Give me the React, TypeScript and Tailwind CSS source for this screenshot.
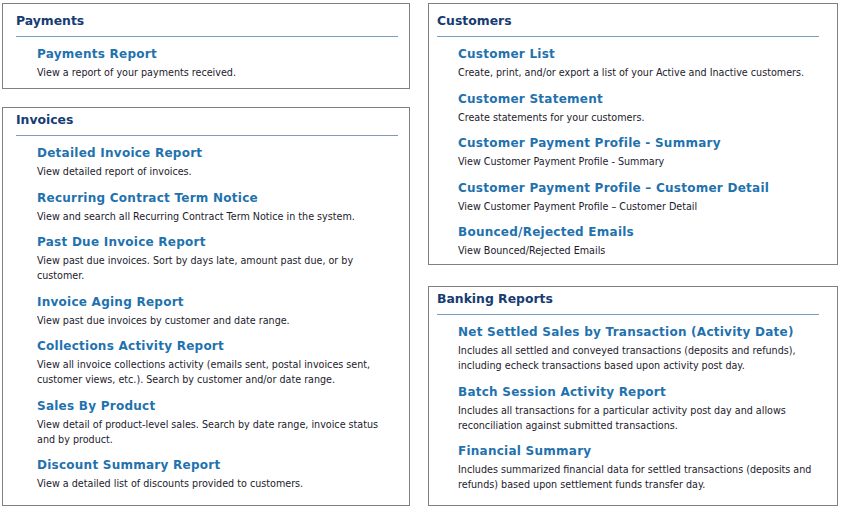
type Item = {
  title: string
  desc: string
}

type Section = {
  name: string
  items: Item[]
}

const payments: Section = {
  name: 'Payments',
  items: [{ title: 'Payments Report', desc: 'View a report of your payments received.' }],
}

const invoices: Section = {
  name: 'Invoices',
  items: [
    { title: 'Detailed Invoice Report', desc: 'View detailed report of invoices.' },
    { title: 'Recurring Contract Term Notice', desc: 'View and search all Recurring Contract Term Notice in the system.' },
    { title: 'Past Due Invoice Report', desc: 'View past due invoices. Sort by days late, amount past due, or by customer.' },
    { title: 'Invoice Aging Report', desc: 'View past due invoices by customer and date range.' },
    {
      title: 'Collections Activity Report',
      desc: 'View all invoice collections activity (emails sent, postal invoices sent, customer views, etc.). Search by customer and/or date range.',
    },
    { title: 'Sales By Product', desc: 'View detail of product-level sales. Search by date range, invoice status and by product.' },
    { title: 'Discount Summary Report', desc: 'View a detailed list of discounts provided to customers.' },
  ],
}

const customers: Section = {
  name: 'Customers',
  items: [
    { title: 'Customer List', desc: 'Create, print, and/or export a list of your Active and Inactive customers.' },
    { title: 'Customer Statement', desc: 'Create statements for your customers.' },
    { title: 'Customer Payment Profile - Summary', desc: 'View Customer Payment Profile - Summary' },
    { title: 'Customer Payment Profile \u2013 Customer Detail', desc: 'View Customer Payment Profile \u2013 Customer Detail' },
    { title: 'Bounced/Rejected Emails', desc: 'View Bounced/Rejected Emails' },
  ],
}

const banking: Section = {
  name: 'Banking Reports',
  items: [
    {
      title: 'Net Settled Sales by Transaction (Activity Date)',
      desc: 'Includes all settled and conveyed transactions (deposits and refunds), including echeck transactions based upon activity post day.',
    },
    {
      title: 'Batch Session Activity Report',
      desc: 'Includes all transactions for a particular activity post day and allows reconciliation against submitted transactions.',
    },
    {
      title: 'Financial Summary',
      desc: 'Includes summarized financial data for settled transactions (deposits and refunds) based upon settlement funds transfer day.',
    },
  ],
}

const Panel = ({ section, className }: { section: Section; className: string }) => {
  return (
    <div className={`border border-[#808080] bg-white ${className}`}>
      <div className="w-[382px]">
        <h2 className="border-b border-[#7b9bbf] pb-[6px] text-[12.4px] leading-[18px] font-bold text-[#163c72]">
          {section.name}
        </h2>
        <ul className="mt-[8px] flex flex-col gap-[9.5px] pl-[21px]">
          {section.items.map((item) => (
            <li key={item.title}>
              <a href="#" className="block text-[12px] leading-[18px] font-bold tracking-[0.25px] text-[#1f72ae]">
                {item.title}
              </a>
              <p className="mt-[2px] text-[9.6px] leading-[15px] text-[#1c1a2c]">{item.desc}</p>
            </li>
          ))}
        </ul>
      </div>
    </div>
  )
}

export default function App() {
  return (
    <div
      className="flex h-[510px] w-[841px] items-stretch gap-[18px] bg-white pt-[3px] pb-[4px] pl-[2px]"
      style={{ fontFamily: '"DejaVu Sans", Verdana, sans-serif' }}
    >
      <div className="flex w-[408px] flex-col gap-[18px]">
        <Panel section={payments} className="pt-[8px] pb-[8px] pl-[13px] pr-[10px]" />
        <Panel section={invoices} className="flex-1 pt-[3px] pl-[13px] pr-[10px]" />
      </div>
      <div className="flex w-[410px] flex-col gap-[21px]">
        <Panel section={customers} className="pt-[8px] pb-[6px] pl-[8px] pr-[17px]" />
        <Panel section={banking} className="flex-1 pt-[3px] pl-[8px] pr-[17px]" />
      </div>
    </div>
  )
}
